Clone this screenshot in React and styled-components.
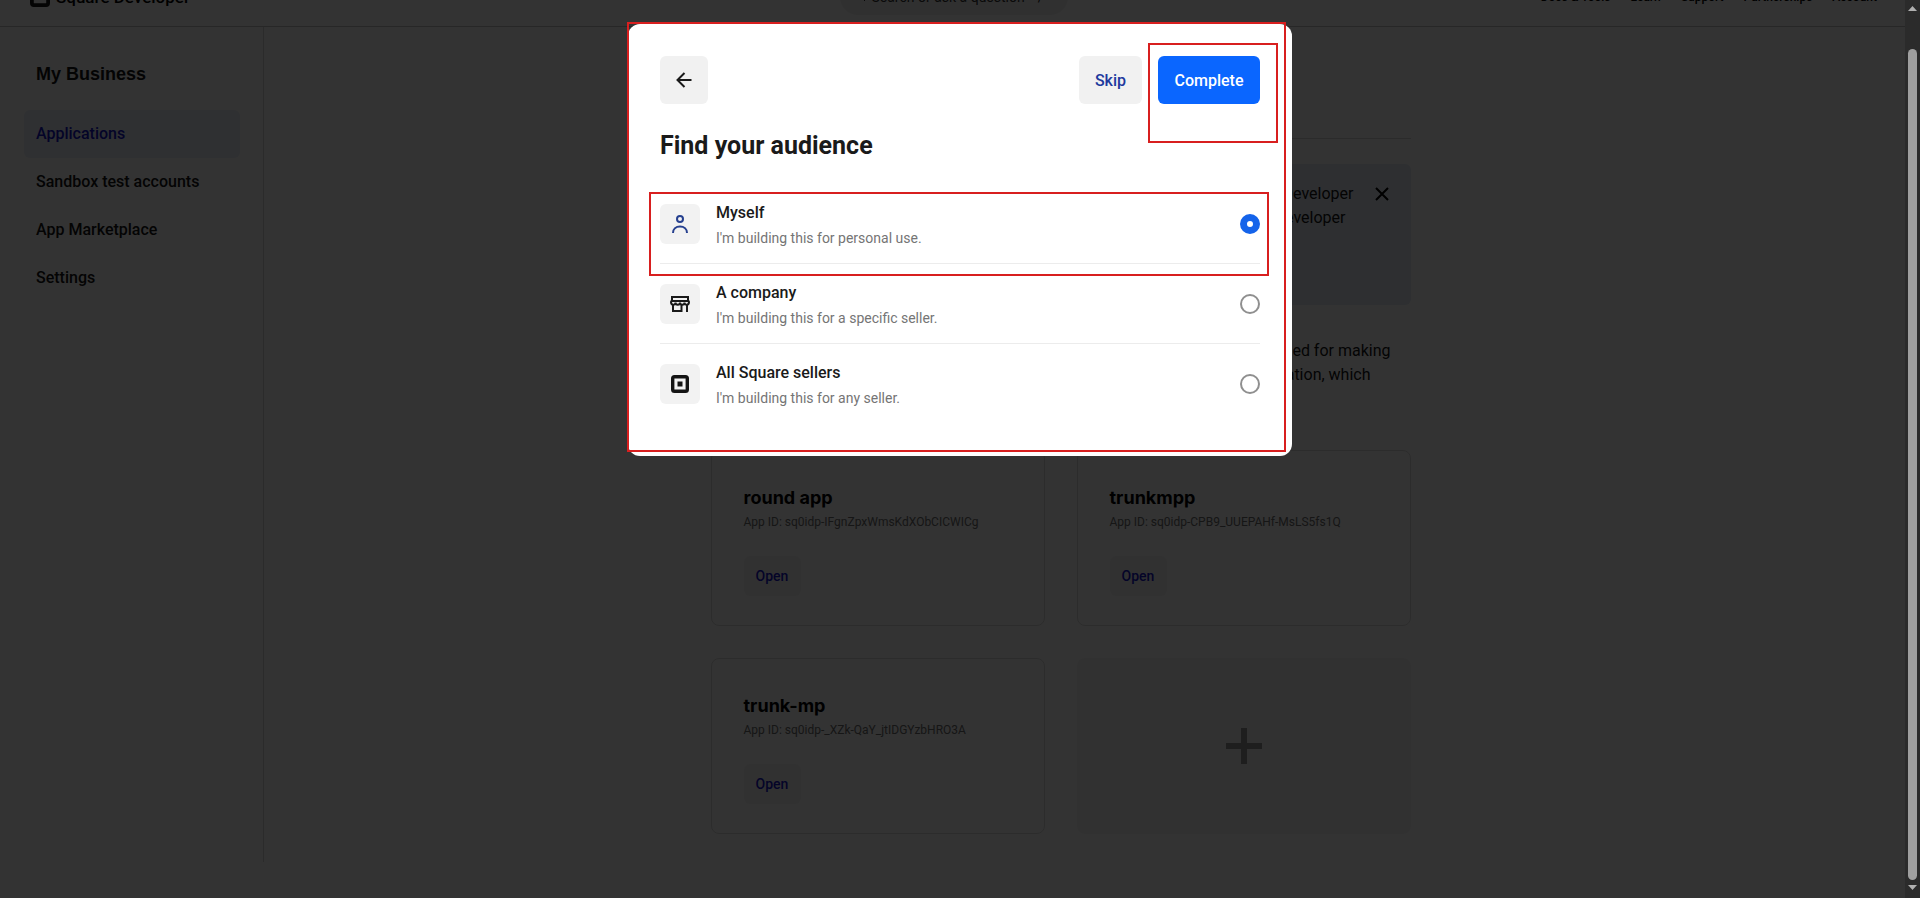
import React, { useState } from 'react';
import styled, { createGlobalStyle } from 'styled-components';

const GlobalStyle = createGlobalStyle`
  *, *::before, *::after { box-sizing: border-box; }
  body {
    margin: 0;
    background: #333333;
    font-family: Roboto, "Liberation Sans", sans-serif;
    font-size: 16px;
    line-height: 24px;
    color: #141414;
  }
  h1, h2, h3, p { margin: 0; }
  button { font: inherit; border: 0; padding: 0; cursor: pointer; }
`;

const Window = styled.div`
  display: flex;
  height: 100vh;
  overflow: hidden;
`;

const Page = styled.div`
  flex: 1;
  min-width: 0;
  display: flex;
  flex-direction: column;
  margin-top: -32px;
  background: #ffffff;
`;

const TopBar = styled.header`
  display: grid;
  grid-template-columns: 1fr auto 1fr;
  align-items: center;
  height: 59px;
  flex: none;
  padding: 0 28px 0 30px;
  border-bottom: 1px solid #c4c4c4;
`;

const Brand = styled.a`
  display: flex;
  align-items: center;
  gap: 6px;
  color: #000000;
  font-size: 17px;
  font-weight: 500;
  text-decoration: none;
`;

const SearchBox = styled.label`
  display: flex;
  align-items: center;
  gap: 6px;
  width: 228px;
  height: 36px;
  padding: 0 24px 0 16px;
  border-radius: 18px;
  background: #f0f0f0;
  font-size: 14px;
`;

const SearchInput = styled.input`
  flex: 1;
  min-width: 0;
  border: 0;
  padding: 0;
  background: none;
  font: inherit;
  outline: none;
  &::placeholder { color: #333333; opacity: 1; }
`;

const TopNav = styled.nav`
  display: flex;
  justify-content: flex-end;
  gap: 20px;
`;

const TopLink = styled.a`
  color: #000000;
  font-size: 12px;
  font-weight: 500;
  text-decoration: none;
`;

const Body = styled.div`
  flex: 1;
  display: flex;
  margin-bottom: 36px;
`;

const Sidebar = styled.aside`
  width: 264px;
  flex: none;
  padding: 35px 23px 0 24px;
  border-right: 1px solid #d8d8d8;
`;

const SidebarTitle = styled.h2`
  padding: 0 12px;
  margin-bottom: 24px;
  font-family: "Liberation Sans", Arial, sans-serif;
  font-size: 18px;
  font-weight: 700;
`;

const SidebarLink = styled.a`
  display: flex;
  align-items: center;
  height: 48px;
  padding: 0 12px;
  border-radius: 6px;
  font-weight: 500;
  text-decoration: none;
  color: ${(p) => (p.$active ? '#1414c8' : '#141414')};
  background: ${(p) => (p.$active ? '#ebf0fa' : 'transparent')};
`;

const Main = styled.main`
  flex: 1;
  padding-right: 48px;
`;

const Column = styled.div`
  max-width: 700px;
  margin: 0 auto;
`;

const Heading = styled.div`
  height: 112px;
  border-bottom: 1px solid #d8d8d8;
`;

const Banner = styled.section`
  display: flex;
  justify-content: flex-end;
  gap: 20px;
  height: 141px;
  margin-top: 25px;
  padding: 18px 21px;
  border-radius: 6px;
  background: #e4ebf5;
`;

const Copy = styled.p`
  text-align: right;
`;

const Line = styled.span`
  display: block;
  padding-right: ${(p) => p.$inset || 0}px;
`;

const CloseButton = styled.button`
  display: flex;
  align-items: center;
  justify-content: center;
  width: 16px;
  height: 24px;
  background: none;
`;

const Intro = styled.div`
  margin: 34px 0 63px;
  padding-right: 20px;
`;

const Cards = styled.div`
  display: grid;
  grid-template-columns: 1fr 1fr;
  gap: 32px;
`;

const Card = styled.article`
  min-height: 176px;
  padding: 33px 32px 0;
  border: 1px solid #dcdcdc;
  border-radius: 8px;
`;

const CardTitle = styled.h3`
  font-family: Inter, sans-serif;
  font-size: 18px;
  line-height: 28px;
  font-weight: 700;
  color: #000000;
`;

const CardId = styled.p`
  margin-bottom: 24px;
  font-size: 12px;
  line-height: 20px;
  color: #6e6e6e;
`;

const OpenButton = styled.button`
  width: 57px;
  height: 40px;
  border-radius: 6px;
  background: #f5f5f5;
  color: #1414c8;
  font-size: 14px;
  font-weight: 500;
`;

const AddTile = styled.button`
  display: flex;
  align-items: center;
  justify-content: center;
  border-radius: 8px;
  background: #f5f5f5;
`;

const Overlay = styled.div`
  position: fixed;
  inset: 0;
  display: flex;
  align-items: flex-start;
  justify-content: center;
  padding-top: 24px;
  background: rgba(0, 0, 0, 0.8);
`;

const Dialog = styled.section`
  position: relative;
  width: 664px;
  max-width: 100%;
  padding: 32px;
  border-radius: 12px;
  background: #ffffff;
`;

const DialogBar = styled.div`
  display: flex;
  gap: 16px;
`;

const ActionButton = styled.button`
  display: flex;
  align-items: center;
  justify-content: center;
  height: 48px;
  min-width: ${(p) => (p.$primary ? 102 : 48)}px;
  padding: ${(p) => (p.$icon ? '0' : '2px 16px 0')};
  margin-right: ${(p) => (p.$icon ? 'auto' : 0)};
  border-radius: 6px;
  font-weight: 500;
  color: ${(p) => (p.$primary ? '#ffffff' : '#1f3a9e')};
  background: ${(p) => (p.$primary ? '#0a66ff' : '#f1f1f1')};
`;

const DialogTitle = styled.h1`
  margin: 26px 0 22px;
  font-size: 25px;
  line-height: 32px;
  font-weight: 700;
  color: #1a1a1a;
`;

const Option = styled.label`
  display: flex;
  align-items: flex-start;
  gap: 16px;
  height: 80px;
  padding-top: 16px;
  border-bottom: 1px solid ${(p) => (p.$last ? 'transparent' : '#ececec')};
  cursor: pointer;
`;

const OptionIcon = styled.span`
  display: flex;
  align-items: center;
  justify-content: center;
  width: 40px;
  height: 40px;
  margin-top: 4px;
  border-radius: 6px;
  background: #f2f2f2;
`;

const OptionText = styled.span`
  flex: 1;
  display: flex;
  flex-direction: column;
  gap: 1px;
  padding-top: 1px;
`;

const OptionName = styled.span`
  font-weight: 500;
  color: #1a1a1a;
`;

const OptionNote = styled.span`
  font-size: 14px;
  color: #757575;
`;

const Radio = styled.input`
  appearance: none;
  width: 20px;
  height: 20px;
  margin: 14px 0 0;
  border: 2px solid #8f8f8f;
  border-radius: 50%;
  background: #ffffff;
  &:checked { border: 7px solid #1463ea; }
`;

const Highlight = styled.div`
  position: absolute;
  left: ${(p) => p.$x}px;
  top: ${(p) => p.$y}px;
  width: ${(p) => p.$w}px;
  height: ${(p) => p.$h}px;
  border: 2px solid #d81f1f;
  pointer-events: none;
`;

const ScrollTrack = styled.div`
  position: relative;
  z-index: 1;
  display: flex;
  flex-direction: column;
  align-items: center;
  gap: 5px;
  width: 15px;
  flex: none;
  padding: 6px 0 8px;
  background: #2b2b2b;
`;

const ScrollThumb = styled.div`
  flex: 1;
  width: 9px;
  margin-top: 33px;
  border-radius: 5px;
  background: #9f9f9f;
`;

function SquareMark({ size }) {
  return (
    <svg width={size} height={size} viewBox="0 0 18 18" aria-hidden="true">
      <rect x="1.7" y="1.7" width="14.6" height="14.6" rx="1.8" fill="none" stroke="#141414" strokeWidth="3.4" />
      <rect x="6.5" y="6.5" width="5" height="5" fill="#141414" />
    </svg>
  );
}

function PersonIcon() {
  return (
    <svg width="18" height="20" viewBox="0 0 18 20" fill="none" stroke="#26408f" strokeWidth="2" aria-hidden="true">
      <circle cx="9" cy="5" r="3" />
      <path d="M2 19C2 15 5 12.5 9 12.5S16 15 16 19" />
    </svg>
  );
}

function StoreIcon() {
  return (
    <svg width="20" height="16" viewBox="0 0 20 16" fill="none" stroke="#1a1a1a" strokeWidth="2" aria-hidden="true">
      <path d="M2 1H18V4L19 6C19 9.5 14.5 9.5 14.5 6.5C14.5 9.5 10 9.5 10 6.5C10 9.5 5.5 9.5 5.5 6.5C5.5 9.5 1 9.5 1 6L2 4Z" />
      <path d="M1.5 5H18.5M3 8V15H11.5V8.5M17 8V16" />
    </svg>
  );
}

function ArrowIcon() {
  return (
    <svg width="16" height="16" viewBox="0 0 16 16" fill="none" stroke="#1a1a1a" strokeWidth="2" aria-hidden="true">
      <path d="M15.5 8H2M8.5 1L1.5 8L8.5 15" />
    </svg>
  );
}

const links = ['Applications', 'Sandbox test accounts', 'App Marketplace', 'Settings'];
const topLinks = ['Docs & Tools', 'Learn', 'Support', 'Partnerships', 'Account'];

const apps = [
  { name: 'round app', id: 'sq0idp-IFgnZpxWmsKdXObCICWICg' },
  { name: 'trunkmpp', id: 'sq0idp-CPB9_UUEPAHf-MsLS5fs1Q' },
  { name: 'trunk-mp', id: 'sq0idp-_XZk-QaY_jtIDGYzbHRO3A' },
];

const options = [
  { id: 'myself', name: 'Myself', note: "I'm building this for personal use.", icon: <PersonIcon /> },
  { id: 'company', name: 'A company', note: "I'm building this for a specific seller.", icon: <StoreIcon /> },
  { id: 'sellers', name: 'All Square sellers', note: "I'm building this for any seller.", icon: <SquareMark size={18} /> },
];

export default function App() {
  const [audience, setAudience] = useState('myself');
  return (
    <>
      <GlobalStyle />
      <Window>
        <Page>
          <TopBar>
            <Brand href="#home">
              <SquareMark size={20} />
              Square Developer
            </Brand>
            <SearchBox>
              <svg width="10" height="10" viewBox="0 0 10 10" fill="none" stroke="#333" aria-hidden="true">
                <circle cx="4" cy="4" r="3" />
                <path d="M6 6L9 9" />
              </svg>
              <SearchInput placeholder="Search or ask a question" aria-label="Search" />
              <span>/</span>
            </SearchBox>
            <TopNav>
              {topLinks.map((t) => (
                <TopLink key={t} href="#top">{t}</TopLink>
              ))}
            </TopNav>
          </TopBar>
          <Body>
            <Sidebar>
              <SidebarTitle>My Business</SidebarTitle>
              <nav>
                {links.map((t, i) => (
                  <SidebarLink key={t} href="#section" $active={i === 0}>{t}</SidebarLink>
                ))}
              </nav>
            </Sidebar>
            <Main>
              <Column>
                <Heading />
                <Banner>
                  <Copy>
                    <Line>Developer</Line>
                    <Line $inset={8}>developer</Line>
                  </Copy>
                  <CloseButton aria-label="Dismiss">
                    <svg width="14" height="14" viewBox="0 0 14 14" stroke="#000" strokeWidth="2" aria-hidden="true">
                      <path d="M1 1L13 13M13 1L1 13" />
                    </svg>
                  </CloseButton>
                </Banner>
                <Intro>
                  <Copy>
                    <Line>needed for making</Line>
                    <Line $inset={20}>application, which</Line>
                  </Copy>
                </Intro>
                <Cards>
                  {apps.map((a) => (
                    <Card key={a.name}>
                      <CardTitle>{a.name}</CardTitle>
                      <CardId>App ID: {a.id}</CardId>
                      <OpenButton>Open</OpenButton>
                    </Card>
                  ))}
                  <AddTile aria-label="Add application">
                    <svg width="36" height="36" viewBox="0 0 36 36" stroke="#949494" strokeWidth="6" aria-hidden="true">
                      <path d="M18 0V36M0 18H36" />
                    </svg>
                  </AddTile>
                </Cards>
              </Column>
            </Main>
          </Body>
        </Page>
        <ScrollTrack>
          <svg width="9" height="5" viewBox="0 0 9 5" fill="#b0b0b0" aria-hidden="true"><path d="M0 5L4.5 0L9 5Z" /></svg>
          <ScrollThumb />
          <svg width="9" height="5" viewBox="0 0 9 5" fill="#b0b0b0" aria-hidden="true"><path d="M0 0L4.5 5L9 0Z" /></svg>
        </ScrollTrack>
      </Window>
      <Overlay>
        <Dialog role="dialog" aria-modal="true" aria-labelledby="dialog-title">
          <DialogBar>
            <ActionButton $icon aria-label="Back"><ArrowIcon /></ActionButton>
            <ActionButton>Skip</ActionButton>
            <ActionButton $primary>Complete</ActionButton>
          </DialogBar>
          <DialogTitle id="dialog-title">Find your audience</DialogTitle>
          {options.map((o, i) => (
            <Option key={o.id} $last={i === options.length - 1}>
              <OptionIcon>{o.icon}</OptionIcon>
              <OptionText>
                <OptionName>{o.name}</OptionName>
                <OptionNote>{o.note}</OptionNote>
              </OptionText>
              <Radio
                type="radio"
                name="audience"
                checked={audience === o.id}
                onChange={() => setAudience(o.id)}
              />
            </Option>
          ))}
          <Highlight $x={-1} $y={-2} $w={659} $h={430} />
          <Highlight $x={520} $y={19} $w={130} $h={100} />
          <Highlight $x={21} $y={168} $w={620} $h={84} />
        </Dialog>
      </Overlay>
    </>
  );
}
